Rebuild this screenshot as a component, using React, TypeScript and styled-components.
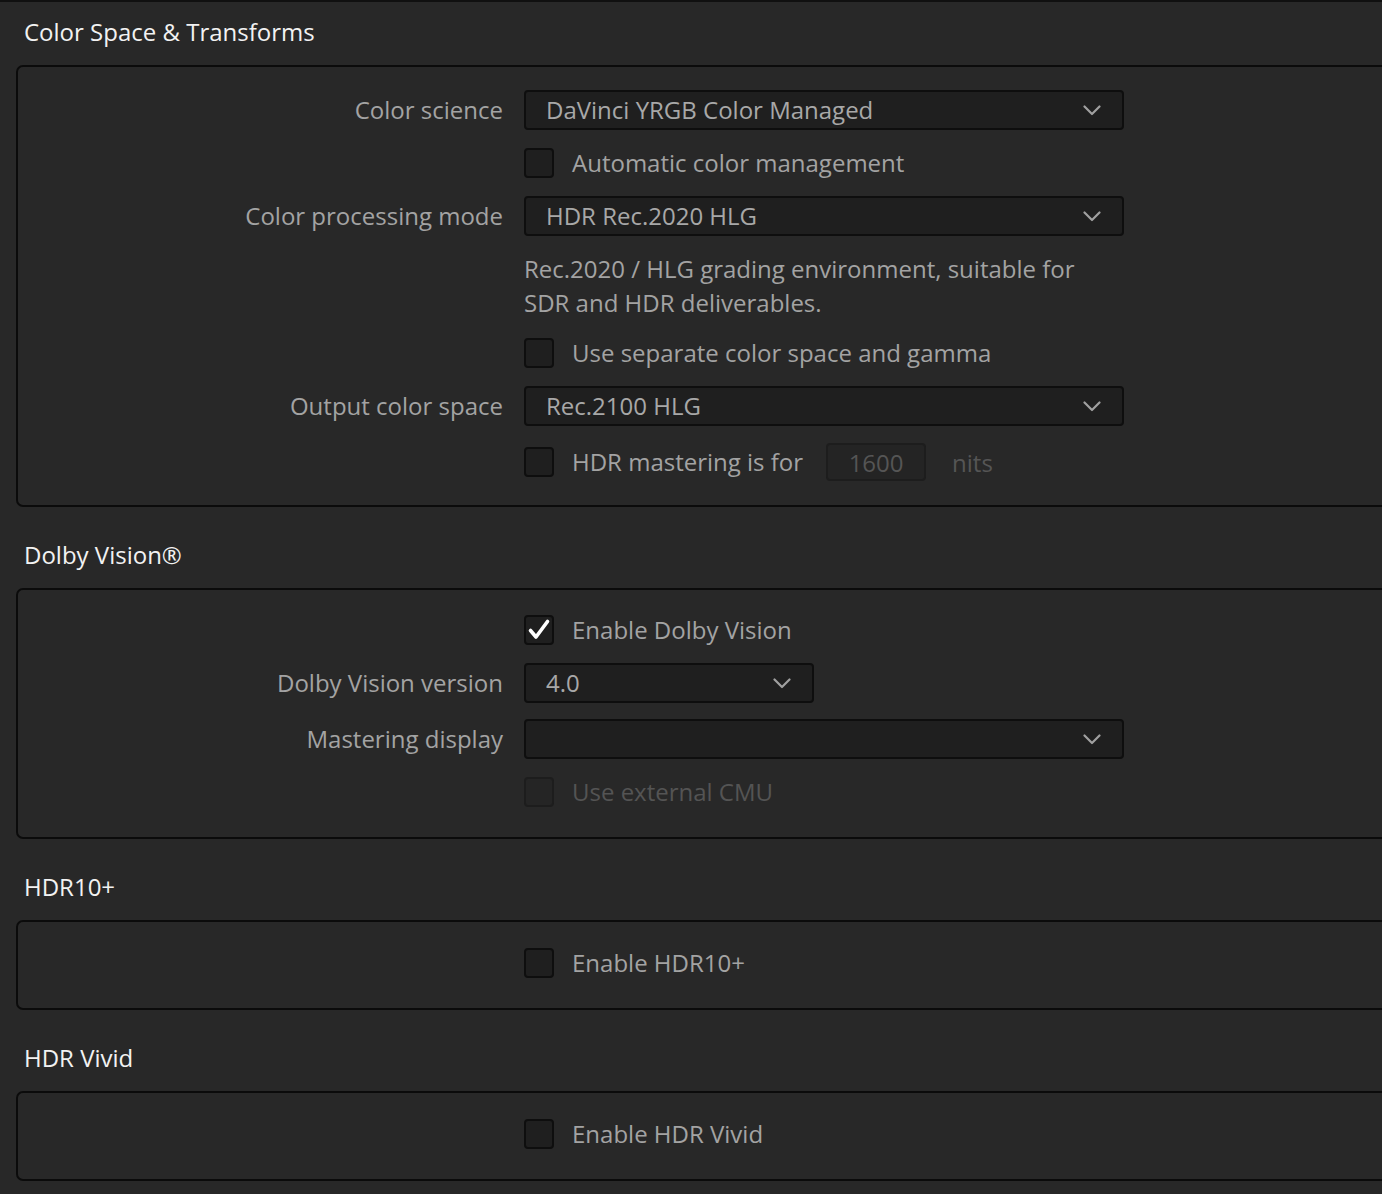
import React from "react";
import styled, { createGlobalStyle } from "styled-components";

const GlobalStyle = createGlobalStyle`
  html, body {
    margin: 0;
    padding: 0;
    background: #282828;
    overflow: hidden;
  }
  body {
    font-family: "Open Sans", "Liberation Sans", sans-serif;
  }
`;

const Page = styled.div`
  width: 1382px;
  height: 1194px;
  box-sizing: border-box;
  border-top: 2px solid #101010;
  background: #282828;
  overflow: hidden;
`;

const Section = styled.section`
  & + & {
    margin-top: 18px;
  }
`;

const Heading = styled.h2`
  margin: 0;
  height: 63px;
  box-sizing: border-box;
  padding: 0 0 4px 24px;
  display: flex;
  align-items: center;
  font-size: 24px;
  line-height: 30px;
  font-weight: 400;
  color: #f2f2f2;
`;

const Panel = styled.div<{ $top: number; $bottom: number }>`
  margin-left: 16px;
  width: 1400px;
  box-sizing: border-box;
  border: 2px solid #0b0b0b;
  border-radius: 7px;
  padding: ${(p) => p.$top}px 0 ${(p) => p.$bottom}px 0;
  display: flex;
  flex-direction: column;
`;

const Row = styled.div<{ $gap?: number }>`
  display: grid;
  grid-template-columns: 485px auto;
  column-gap: 21px;
  align-items: center;
  margin-top: ${(p) => p.$gap ?? 0}px;
`;

const Label = styled.div`
  text-align: right;
  font-size: 24px;
  line-height: 30px;
  color: #a3a3a3;
  white-space: nowrap;
`;

const SelectBox = styled.div<{ $width: number }>`
  width: ${(p) => p.$width}px;
  height: 40px;
  box-sizing: border-box;
  border: 2px solid #0e0e0e;
  border-radius: 4px;
  background: #1f1f1f;
  display: flex;
  align-items: center;
  justify-content: space-between;
  padding: 0 21px 0 20px;
  font-size: 24px;
  line-height: 30px;
  color: #a8a8a8;
`;

const CheckRow = styled.div`
  display: flex;
  align-items: center;
  min-height: 30px;
`;

const Box = styled.div<{ $disabled?: boolean }>`
  width: 30px;
  height: 30px;
  box-sizing: border-box;
  border: 2px solid ${(p) => (p.$disabled ? "#1d1d1d" : "#0e0e0e")};
  border-radius: 4px;
  background: ${(p) => (p.$disabled ? "#252525" : "#1f1f1f")};
  display: flex;
  align-items: center;
  justify-content: center;
  flex-shrink: 0;
`;

const CheckText = styled.span<{ $disabled?: boolean }>`
  margin-left: 18px;
  font-size: 24px;
  line-height: 30px;
  color: ${(p) => (p.$disabled ? "#545454" : "#a3a3a3")};
  white-space: nowrap;
`;

const Description = styled.div`
  width: 556px;
  font-size: 24px;
  line-height: 34px;
  color: #a3a3a3;
`;

const NitsInput = styled.div`
  margin-left: 23px;
  width: 100px;
  height: 38px;
  box-sizing: border-box;
  border: 2px solid #1d1d1d;
  border-radius: 4px;
  background: #242424;
  display: flex;
  align-items: center;
  justify-content: center;
  font-size: 24px;
  color: #555555;
`;

const Unit = styled.span`
  margin-left: 26px;
  font-size: 24px;
  color: #555555;
`;

const Chevron = () => (
  <svg width="18" height="11" viewBox="0 0 18 11" fill="none">
    <path d="M1.5 1.5 L9 9 L16.5 1.5" stroke="#a0a0a0" strokeWidth="2.2" strokeLinecap="round" strokeLinejoin="round" />
  </svg>
);

const Tick = () => (
  <svg width="24" height="24" viewBox="0 0 24 24" fill="none">
    <path d="M3.5 12.5 L9 19 L20.5 3.5" stroke="#ffffff" strokeWidth="3.6" strokeLinecap="round" strokeLinejoin="round" />
  </svg>
);

const Select = ({ value, width = 600 }: { value?: string; width?: number }) => (
  <SelectBox $width={width}>
    <span>{value}</span>
    <Chevron />
  </SelectBox>
);

const Checkbox = ({
  label,
  checked,
  disabled,
  children,
}: {
  label: string;
  checked?: boolean;
  disabled?: boolean;
  children?: React.ReactNode;
}) => (
  <CheckRow>
    <Box $disabled={disabled}>{checked && <Tick />}</Box>
    <CheckText $disabled={disabled}>{label}</CheckText>
    {children}
  </CheckRow>
);

export default function App() {
  return (
    <Page>
      <GlobalStyle />
      <Section>
        <Heading>Color Space &amp; Transforms</Heading>
        <Panel $top={23} $bottom={24}>
          <Row>
            <Label>Color science</Label>
            <Select value="DaVinci YRGB Color Managed" />
          </Row>
          <Row $gap={18}>
            <span />
            <Checkbox label="Automatic color management" />
          </Row>
          <Row $gap={18}>
            <Label>Color processing mode</Label>
            <Select value="HDR Rec.2020 HLG" />
          </Row>
          <Row $gap={16}>
            <span />
            <Description>
              Rec.2020 / HLG grading environment, suitable for SDR and HDR deliverables.
            </Description>
          </Row>
          <Row $gap={18}>
            <span />
            <Checkbox label="Use separate color space and gamma" />
          </Row>
          <Row $gap={18}>
            <Label>Output color space</Label>
            <Select value="Rec.2100 HLG" />
          </Row>
          <Row $gap={17}>
            <span />
            <Checkbox label="HDR mastering is for">
              <NitsInput>1600</NitsInput>
              <Unit>nits</Unit>
            </Checkbox>
          </Row>
        </Panel>
      </Section>

      <Section>
        <Heading>Dolby Vision®</Heading>
        <Panel $top={25} $bottom={30}>
          <Row>
            <span />
            <Checkbox label="Enable Dolby Vision" checked />
          </Row>
          <Row $gap={18}>
            <Label>Dolby Vision version</Label>
            <Select value="4.0" width={290} />
          </Row>
          <Row $gap={16}>
            <Label>Mastering display</Label>
            <Select />
          </Row>
          <Row $gap={18}>
            <span />
            <Checkbox label="Use external CMU" disabled />
          </Row>
        </Panel>
      </Section>

      <Section>
        <Heading>HDR10+</Heading>
        <Panel $top={26} $bottom={30}>
          <Row>
            <span />
            <Checkbox label="Enable HDR10+" />
          </Row>
        </Panel>
      </Section>

      <Section>
        <Heading>HDR Vivid</Heading>
        <Panel $top={26} $bottom={30}>
          <Row>
            <span />
            <Checkbox label="Enable HDR Vivid" />
          </Row>
        </Panel>
      </Section>
    </Page>
  );
}
